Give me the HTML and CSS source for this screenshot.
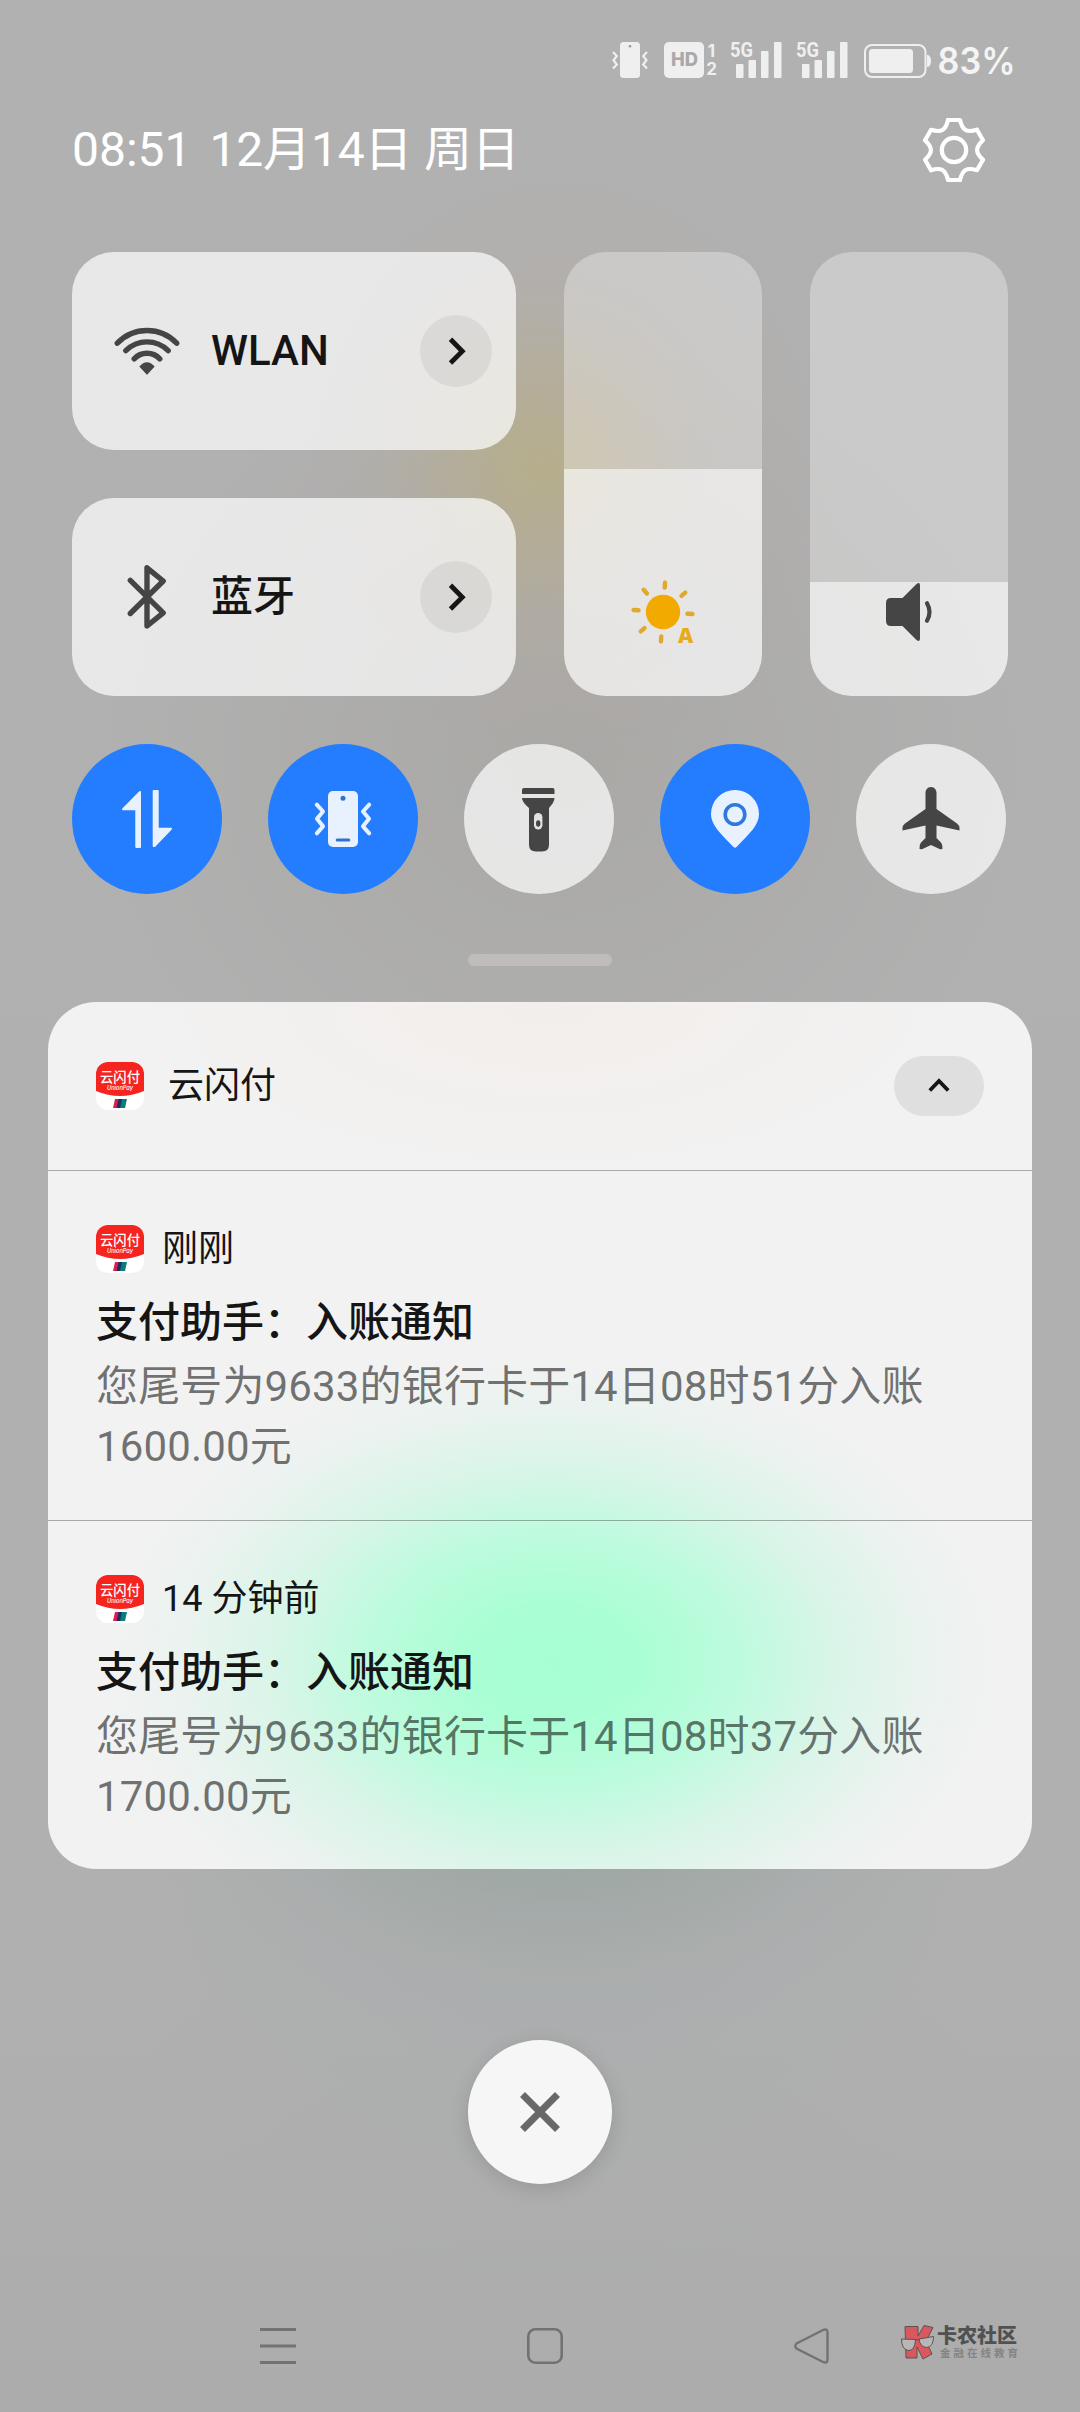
FILE: index.html
```html
<!DOCTYPE html>
<html lang="zh-CN">
<head>
<meta charset="utf-8">
<title>通知中心</title>
<link rel="stylesheet" href="styles.css">
</head>
<body>
<svg width="0" height="0" class="defs" aria-hidden="true">
  <defs>
    <path id="tooth" d="M-6-30H6C8.5-19.5 12.6-17.1 23-20.2"/>
    <path id="ray" d="M0-24.5V-29.5"/>
    <clipPath id="appClip"><rect width="48" height="48" rx="12"/></clipPath>
    <symbol id="app" viewBox="0 0 48 48">
      <g clip-path="url(#appClip)">
        <rect width="48" height="48" fill="#fff"/>
        <path d="M0 0H48V29Q24 39 0 29Z" fill="#f5241f"/>
        <path d="M19 37H24L22 46H17Z" fill="#d8204d"/>
        <path d="M22.500 37H28L26 46H20.500Z" fill="#1d2f66"/>
        <path d="M26 37H31L29 46H24Z" fill="#0b7d78"/>
      </g>
      <text x="24" y="19.800" class="app-cn" textLength="40" lengthAdjust="spacingAndGlyphs">云闪付</text>
      <text x="24" y="28" class="app-en" textLength="26" lengthAdjust="spacingAndGlyphs">UnionPay</text>
    </symbol>
  </defs>
</svg>
<div class="screen">
  <header class="status">
    <svg class="vib" viewBox="611 40 38 40" width="38" height="40">
      <rect x="620" y="42" width="20" height="36" rx="3.500" fill="#efefef"/>
      <circle cx="630" cy="46.300" r="1.300" fill="#999"/>
      <path d="M613 52L616.800 56L613.500 60.300L616.800 64.500L613 68.500M647 52L643.200 56L646.500 60.300L643.200 64.500L647 68.500" fill="none" stroke="#efefef" stroke-width="2.200"/>
    </svg>
    <svg class="hd" viewBox="664 40 54 40" width="54" height="40">
      <rect x="664" y="42" width="40" height="36" rx="5" fill="#efefef"/>
      <text x="684.500" y="66" class="t-hd" textLength="27" lengthAdjust="spacingAndGlyphs">HD</text>
      <text x="711.500" y="57" class="t-sim">1</text>
      <text x="711.500" y="75" class="t-sim">2</text>
    </svg>
    <svg class="sig" viewBox="730 36 52 44" width="52" height="44" fill="#efefef">
      <rect x="736" y="64" width="7.500" height="14" rx="1"/><rect x="748.500" y="60" width="7.500" height="18" rx="1"/><rect x="761" y="51" width="7.500" height="27" rx="1"/><rect x="774" y="42" width="7.500" height="36" rx="1"/>
      <text x="730" y="56.500" class="t-5g" textLength="23" lengthAdjust="spacingAndGlyphs">5G</text>
    </svg>
    <svg class="sig" viewBox="730 36 52 44" width="52" height="44" fill="#efefef">
      <rect x="736" y="64" width="7.500" height="14" rx="1"/><rect x="748.500" y="60" width="7.500" height="18" rx="1"/><rect x="761" y="51" width="7.500" height="27" rx="1"/><rect x="774" y="42" width="7.500" height="36" rx="1"/>
      <text x="730" y="56.500" class="t-5g" textLength="23" lengthAdjust="spacingAndGlyphs">5G</text>
    </svg>
    <svg class="bat" viewBox="864 40 68 40" width="68" height="40">
      <rect x="865" y="45" width="60.500" height="32" rx="7" fill="none" stroke="#efefef" stroke-width="2"/>
      <rect x="869" y="49" width="44" height="24" rx="3.500" fill="#efefef"/>
      <path d="M927 55H928Q931 56 931 61T928 67H927Z" fill="#efefef"/>
    </svg>
    <svg viewBox="936 34 82 54" width="82" height="54" class="pct"><text x="937.500" y="74" class="t-pct" textLength="78" lengthAdjust="spacingAndGlyphs">83%</text></svg>
  </header>

  <div class="head">
    <span class="time">08:51</span><span class="date">12月14日 周日</span>
    <svg viewBox="-34 -34 68 68" width="68" height="68" fill="none" stroke="#fff" stroke-width="4.200" stroke-linecap="round" stroke-linejoin="round">
      <use href="#tooth"/><use href="#tooth" transform="rotate(60)"/><use href="#tooth" transform="rotate(120)"/><use href="#tooth" transform="rotate(180)"/><use href="#tooth" transform="rotate(240)"/><use href="#tooth" transform="rotate(300)"/>
      <circle r="12.200"/>
    </svg>
  </div>

  <section class="panel">
    <div class="tiles">
      <div class="tile">
        <svg viewBox="111 315 72 72" width="72" height="72" fill="none" stroke="#454545" stroke-width="5.400" stroke-linecap="round">
          <path d="M117.300 343.200A41 41 0 0 1 176.700 343.200M125.800 350.600A30 30 0 0 1 168.200 350.600M134.200 358.800A17.600 17.600 0 0 1 159.800 358.800"/>
          <path d="M139.300 366.500Q147 358 154.700 366.500L147.800 374Q147 375 146.200 374Z" fill="#454545" stroke="none"/>
        </svg>
        <span>WLAN</span>
        <i class="go"><svg viewBox="420 315 72 72" width="72" height="72"><path d="M450.500 339.300L462.300 351.200L450.500 363" fill="none" stroke="#151515" stroke-width="4.800"/></svg></i>
      </div>
      <div class="tile">
        <svg viewBox="111 561 72 72" width="72" height="72" fill="none" stroke="#454545" stroke-width="5.400" stroke-linecap="round" stroke-linejoin="round">
          <path d="M130.300 580.300L163.200 612.800L147 626V567.800L163.200 581L130.300 613.500"/>
        </svg>
        <span>蓝牙</span>
        <i class="go"><svg viewBox="420 315 72 72" width="72" height="72"><path d="M450.500 339.300L462.300 351.200L450.500 363" fill="none" stroke="#151515" stroke-width="4.800"/></svg></i>
      </div>
    </div>
    <div class="slider"><div class="fill bright">
      <svg viewBox="-36 -36 72 72" width="72" height="72" fill="#f2a900">
        <circle r="17.200"/>
        <g stroke="#dfa92e" stroke-width="4.400" stroke-linecap="round"><use href="#ray" transform="rotate(4)"/><use href="#ray" transform="rotate(49)"/><use href="#ray" transform="rotate(94)"/><use href="#ray" transform="rotate(184)"/><use href="#ray" transform="rotate(229)"/><use href="#ray" transform="rotate(274)"/><use href="#ray" transform="rotate(319)"/></g>
        <text x="22.500" y="30.500" class="t-auto">A</text>
      </svg>
    </div></div>
    <div class="slider"><div class="fill volume">
      <svg viewBox="873 576 72 72" width="72" height="72" fill="#454545">
        <path d="M891 598H902.500L916.500 584Q920 581.500 920 585.500V638.500Q920 642.500 916.500 640L902.500 626H891Q886 626 886 621V603Q886 598 891 598Z"/>
        <path d="M927 603.300Q932 612 927 620.700" fill="none" stroke="#454545" stroke-width="4.200" stroke-linecap="round"/>
      </svg>
    </div></div>
  </section>

  <section class="toggles">
    <div class="dot on"><svg viewBox="72 744 150 150" fill="#e8f2ff" stroke="#e8f2ff" stroke-width="2" stroke-linejoin="round"><path d="M140 792V847H136.300V809.300H123Z"/><path d="M153.700 791H157.700V828.700H171L154.500 846H153.700Z"/></svg></div>
    <div class="dot on"><svg viewBox="268 744 150 150">
      <rect x="328" y="791" width="30" height="56" rx="5" fill="#e8f2ff"/><circle cx="343" cy="798.300" r="2.500" fill="#2f73cf"/><rect x="335.700" y="838.400" width="14.600" height="3.200" rx="1.500" fill="#2f73cf"/>
      <path d="M316.800 804.700L323 811.500L317 818.800L323 826.300L316.800 833.300M369.200 804.700L363 811.500L369 818.800L363 826.300L369.200 833.300" fill="none" stroke="#e8f2ff" stroke-width="4" stroke-linecap="round" stroke-linejoin="round"/></svg></div>
    <div class="dot"><svg viewBox="464 744 150 150" fill="#454545">
      <path d="M524 788H552.500Q554.500 788 554.500 790V794H522V790Q522 788 524 788Z"/>
      <path d="M522 798H554.500Q554.500 802 549 808V844.500Q549 851.500 542 851.500H536Q529 851.500 529 844.500V808Q522 802 522 798Z"/>
      <rect x="534" y="813" width="8.400" height="16.500" rx="4.200" fill="#e5e4e2"/><ellipse cx="538.200" cy="823.500" rx="2.200" ry="3.300"/></svg></div>
    <div class="dot on"><svg viewBox="660 744 150 150"><path d="M735 790A24 24 0 0 1 759 814C759 825 750 833 736.500 847Q735 848.500 733.500 847C720 833 711 825 711 814A24 24 0 0 1 735 790Z" fill="#e8f2ff"/><circle cx="735" cy="814.500" r="9.800" fill="none" stroke="#2f78dc" stroke-width="3.600"/></svg></div>
    <div class="dot"><svg viewBox="856 744 150 150" fill="#454545"><path d="M931 787C934.500 787 936.500 790 936.500 793V809L957 823.500Q959.500 825.500 959.500 828V830.500L936.500 825.500V838L941 842.500Q943 845 942.500 849L940 849.300L931 845L922 849.300L919.500 849Q919 845 921 842.500L925.500 838V825.500L902.500 830.500V828Q902.500 825.500 905 823.500L925.500 809V793C925.500 790 927.500 787 931 787Z"/></svg></div>
  </section>

  <div class="handle"></div>

  <main class="card">
    <div class="group">
      <svg class="app" width="48" height="48"><use href="#app"/></svg>
      <span>云闪付</span>
      <i class="fold"><svg viewBox="894 1056 90 60" width="90" height="60"><path d="M929.800 1090.500L939 1081L948.200 1090.500" fill="none" stroke="#151515" stroke-width="3.800"/></svg></i>
    </div>
    <article class="note">
      <div class="meta"><svg class="app" width="48" height="48"><use href="#app"/></svg><span>刚刚</span></div>
      <h2>支付助手：入账通知</h2>
      <p>您尾号为9633的银行卡于14日08时51分入账<br>1600.00元</p>
    </article>
    <article class="note">
      <div class="meta"><svg class="app" width="48" height="48"><use href="#app"/></svg><span>14 分钟前</span></div>
      <h2>支付助手：入账通知</h2>
      <p>您尾号为9633的银行卡于14日08时37分入账<br>1700.00元</p>
    </article>
  </main>

  <div class="close"><svg viewBox="468 2040 144 144" width="144" height="144"><path d="M522.500 2094.500L557.500 2129.500M557.500 2094.500L522.500 2129.500" stroke="#686868" stroke-width="7"/></svg></div>

  <nav class="nav">
    <svg viewBox="0 0 36 36" width="36" height="36"><path d="M0 1.500H36M0 18H36M0 34.500H36" stroke="#727272" stroke-width="3"/></svg>
    <svg viewBox="0 0 36 36" width="36" height="36"><rect x="1.300" y="1.300" width="33.400" height="33.400" rx="7" fill="none" stroke="#727272" stroke-width="2.600"/></svg>
    <svg viewBox="0 0 36 36" width="36" height="36"><path d="M2.500 15.500L29.500 1.800Q33.500 0.500 33.500 4.500V31.500Q33.500 35.500 29.500 34.200L2.500 20.500Q0 18 2.500 15.500Z" fill="none" stroke="#727272" stroke-width="2.400"/></svg>
  </nav>

  <div class="mark">
    <svg viewBox="900 2323 36 38" width="36" height="38" stroke="#55484a" stroke-width="1">
      <path d="M905 2326.500H918V2336L924 2325.500L933 2327.500L926 2341L932 2354L923 2359L917 2347V2358H906Z" fill="#dd5055"/>
      <path d="M901.500 2339L915.500 2339.500Q915 2351 908 2350.500Q901.500 2349 901.500 2339ZM919 2339L933.500 2336.500Q933.500 2347 926.500 2347.500Q920 2347 919 2339Z" fill="#b9b9b9"/>
      <path d="M915.500 2340L919 2339.500" fill="none"/>
    </svg>
    <div><b>卡农社区</b><small>金融在线教育</small></div>
  </div>
</div>
</body>
</html>
```
FILE: styles.css
```css
* { box-sizing: border-box; }
body {
  margin: 0;
  font-family: Roboto, "Noto Sans CJK SC", sans-serif;
  color: #151515;
}
svg { display: block; flex: none; }
.defs { position: absolute; }
.screen {
  position: relative;
  width: 1080px;
  height: 2412px;
  overflow: hidden;
  display: flex;
  flex-direction: column;
  background:
    radial-gradient(ellipse 200px 210px at 540px 465px, rgba(184, 176, 122, .6), rgba(184, 174, 130, .42) 35%, rgba(184, 172, 140, .14) 70%, rgba(184, 172, 140, 0)),
    radial-gradient(ellipse 280px 320px at 560px 470px, rgba(184, 166, 150, .35), rgba(180, 170, 150, 0)),
    radial-gradient(ellipse 460px 420px at 560px 760px, rgba(162, 160, 155, .5), rgba(165, 163, 158, 0)),
    radial-gradient(ellipse 480px 400px at 560px 1650px, rgba(110, 150, 135, .75), rgba(140, 160, 152, .4) 55%, rgba(155, 168, 163, .12) 80%, rgba(160, 170, 166, 0)),
    radial-gradient(ellipse 480px 500px at 560px 1800px, rgba(165, 170, 172, .5), rgba(165, 170, 172, 0)),
    linear-gradient(#b1b1b1 0, #b0b0b0 2000px, #acacac 2412px);
}

.status {
  display: flex;
  align-items: flex-end;
  height: 40px;
  margin: 40px 62px 0 611px;
  flex: none;
}
.vib { margin-right: 15px; }
.hd { margin-right: 12px; }
.sig { margin-right: 14px; }
.sig + .bat { margin-left: 2px; margin-right: 4px; }
.pct { margin-bottom: -8px; }
text { font-family: Inter, sans-serif; }
.t-hd { font-size: 18.5px; font-weight: 800; fill: #a9a9a9; text-anchor: middle; }
.t-sim { font-size: 17px; font-weight: 700; fill: #efefef; text-anchor: middle; }
.t-5g { font-family: Roboto, sans-serif; font-size: 21px; font-weight: 700; }
.t-pct { font-size: 37px; font-weight: 600; fill: #f4f4f4; }
.t-auto { font-family: "Open Sans", sans-serif; font-size: 21px; font-weight: 800; text-anchor: middle; fill: #e9ab1c; }

.head {
  display: flex;
  align-items: center;
  height: 68px;
  margin: 36px 92px 0 72px;
  color: #fff;
  font-size: 48px;
  line-height: 56px;
  flex: none;
}
.time { margin-right: 18px; }
.date { letter-spacing: -.2px; }
.head svg { margin-left: auto; }

.panel {
  display: flex;
  gap: 48px;
  height: 444px;
  margin: 68px 72px 0;
  flex: none;
}
.tiles { display: flex; flex-direction: column; gap: 48px; width: 444px; }
.tile {
  display: flex;
  align-items: center;
  height: 198px;
  padding: 0 24px 0 39px;
  border-radius: 42px;
  background: rgba(255, 255, 255, .7);
  font-size: 42px;
  line-height: 50px;
  font-weight: 500;
}
.tile span { margin-left: 28px; }
.go { margin-left: auto; width: 72px; height: 72px; border-radius: 50%; background: rgba(0, 0, 0, .06); }
.slider {
  display: flex;
  align-items: flex-end;
  width: 198px;
  border-radius: 42px;
  overflow: hidden;
  background: rgba(255, 255, 255, .32);
}
.fill {
  display: flex;
  width: 100%;
  align-items: flex-end;
  justify-content: center;
  padding-bottom: 48px;
  background: rgba(255, 255, 255, .56);
}
.bright { height: 227px; }
.volume { height: 114px; }

.toggles { display: flex; gap: 46px; margin: 48px 72px 0; flex: none; }
.dot { width: 150px; height: 150px; border-radius: 50%; background: rgba(255, 255, 255, .7); flex: none; }
.on { background: #247dff; }

.handle { width: 144px; height: 12px; margin: 60px auto 0; border-radius: 6px; background: #bfbcbb; flex: none; }

.card {
  width: 984px;
  height: 867px;
  margin: 36px auto 0;
  border-radius: 48px;
  overflow: hidden;
  flex: none;
  background:
    radial-gradient(ellipse 480px 330px at 505px 660px, #a6ffd3 0, rgba(166, 255, 211, .95) 18%, rgba(168, 255, 213, .72) 38%, rgba(178, 250, 217, .4) 58%, rgba(200, 246, 226, .2) 76%, rgba(225, 244, 235, .08) 90%, rgba(242, 242, 242, 0)),
    radial-gradient(ellipse 420px 180px at 500px 0, #f3eeeb, rgba(242, 242, 242, 0)),
    #f2f2f2;
}
.group {
  display: flex;
  align-items: center;
  height: 168px;
  padding: 0 48px;
  font-size: 36px;
  line-height: 42px;
}
.group span { margin-left: 24px; }
.fold { margin-left: auto; width: 90px; height: 60px; border-radius: 30px; background: rgba(0, 0, 0, .08); }
.note { height: 350px; padding: 54px 48px 0; border-top: 1px solid rgba(0, 0, 0, .3); }
.meta { display: flex; align-items: center; height: 48px; font-size: 36px; line-height: 42px; }
.meta span { margin-left: 18px; }
.note h2 { margin: 20px 0 0; font-size: 42px; line-height: 60px; font-weight: 500; }
.note p { margin: 4px 0 0; font-size: 42px; line-height: 60px; letter-spacing: .15px; color: rgba(0, 0, 0, .55); white-space: nowrap; }
.app-cn { font-family: "Noto Sans CJK SC", sans-serif; font-size: 13.5px; font-weight: 500; fill: #fff; text-anchor: middle; }
.app-en { font-size: 6px; font-style: italic; font-weight: 500; fill: #fff; text-anchor: middle; }

.close {
  width: 144px;
  height: 144px;
  margin: 171px auto 0;
  border-radius: 50%;
  background: #f6f6f6;
  box-shadow: 0 4px 20px rgba(0, 0, 0, .13);
  flex: none;
}
.nav { display: flex; gap: 231px; margin: 144px 0 0 260px; flex: none; }

.mark { position: absolute; left: 900px; top: 2323px; display: flex; font-family: "Noto Sans CJK SC", sans-serif; opacity: .9; }
.mark div { display: flex; flex-direction: column; padding-top: 2px; margin-left: 1px; }
.mark b { font-size: 20px; line-height: 20px; font-weight: 900; color: #484848; }
.mark small { margin: 2px 0 0 3px; font-size: 10.5px; line-height: 12px; letter-spacing: 3px; color: #808080; font-weight: 700; white-space: nowrap; }
```
